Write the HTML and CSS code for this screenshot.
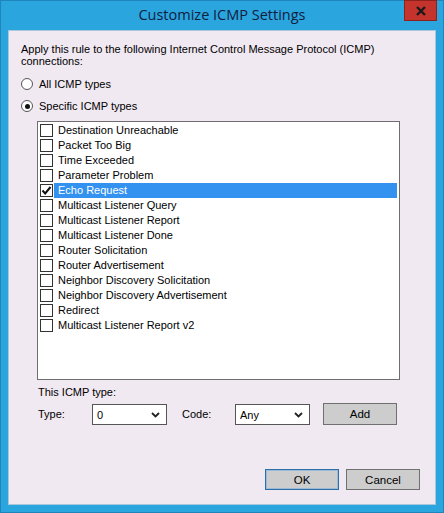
FILE: index.html
```html
<!DOCTYPE html>
<html>
<head>
<meta charset="utf-8">
<link rel="stylesheet" href="styles.css">
</head>
<body>
<div class="window">
  <div class="titlebar">
    <div class="title">Customize ICMP Settings</div>
    <div class="close"><svg width="12" height="10" viewBox="0 0 12 10"><path d="M2 1 L10 9 M10 1 L2 9" stroke="#1a1a1a" stroke-width="2.4"/></svg></div>
  </div>
  <div class="content">
    <p class="intro">Apply this rule to the following Internet Control Message Protocol (ICMP)<br>connections:</p>
    <div class="radio-row"><span class="radio"></span><span>All ICMP types</span></div>
    <div class="radio-row second"><span class="radio on"></span><span>Specific ICMP types</span></div>
    <div class="listbox">
      <div class="item"><span class="cb"></span><span class="lbl">Destination Unreachable</span></div>
      <div class="item"><span class="cb"></span><span class="lbl">Packet Too Big</span></div>
      <div class="item"><span class="cb"></span><span class="lbl">Time Exceeded</span></div>
      <div class="item"><span class="cb"></span><span class="lbl">Parameter Problem</span></div>
      <div class="item sel"><span class="cb"><svg width="11" height="11" viewBox="0 0 11 11"><path d="M1.5 5.5 L4.2 8.5 L9.5 2" fill="none" stroke="#111" stroke-width="2"/></svg></span><span class="lbl">Echo Request</span></div>
      <div class="item"><span class="cb"></span><span class="lbl">Multicast Listener Query</span></div>
      <div class="item"><span class="cb"></span><span class="lbl">Multicast Listener Report</span></div>
      <div class="item"><span class="cb"></span><span class="lbl">Multicast Listener Done</span></div>
      <div class="item"><span class="cb"></span><span class="lbl">Router Solicitation</span></div>
      <div class="item"><span class="cb"></span><span class="lbl">Router Advertisement</span></div>
      <div class="item"><span class="cb"></span><span class="lbl">Neighbor Discovery Solicitation</span></div>
      <div class="item"><span class="cb"></span><span class="lbl">Neighbor Discovery Advertisement</span></div>
      <div class="item"><span class="cb"></span><span class="lbl">Redirect</span></div>
      <div class="item"><span class="cb"></span><span class="lbl">Multicast Listener Report v2</span></div>
    </div>
    <div class="type-label">This ICMP type:</div>
    <div class="controls">
      <span class="ctl-label type">Type:</span>
      <div class="select s1"><span>0</span><svg width="9" height="6" viewBox="0 0 9 6"><path d="M1 1 L4.5 4.5 L8 1" fill="none" stroke="#222" stroke-width="1.8"/></svg></div>
      <span class="ctl-label code">Code:</span>
      <div class="select s2"><span>Any</span><svg width="9" height="6" viewBox="0 0 9 6"><path d="M1 1 L4.5 4.5 L8 1" fill="none" stroke="#222" stroke-width="1.8"/></svg></div>
      <div class="btn add">Add</div>
    </div>
    <div class="footer">
      <div class="btn ok">OK</div>
      <div class="btn cancel">Cancel</div>
    </div>
  </div>
</div>
</body>
</html>
```

FILE: styles.css
```css
html, body {
  margin: 0;
  padding: 0;
  background: #2ba5de;
}
.window {
  width: 444px;
  height: 513px;
  box-sizing: border-box;
  background: #2ba5de;
  border: 1px solid #1f86bd;
  display: flex;
  flex-direction: column;
  font-family: "Liberation Sans", Arial, sans-serif;
  font-size: 11px;
  color: #000;
}
.titlebar {
  height: 29px;
  display: flex;
  justify-content: center;
  position: relative;
}
.title {
  font-family: "Open Sans", "Liberation Sans", sans-serif;
  font-size: 14.5px;
  color: #10203e;
  line-height: 28px;
}
.close {
  position: absolute;
  right: 6px;
  top: -1px;
  width: 33px;
  height: 21px;
  box-sizing: border-box;
  background: #c4342c;
  border: 1px solid #8d221c;
  display: flex;
  align-items: center;
  justify-content: center;
}
.content {
  margin: 0 7px;
  height: 475px;
  background: #f1e9f1;
  padding: 12px 0 0 12px;
  box-sizing: border-box;
  border: 1px solid #a9c6da;
}
.intro {
  margin: 0;
  line-height: 12px;
}
.radio-row {
  display: flex;
  align-items: center;
  height: 14px;
  margin-top: 10px;
  gap: 6px;
}
.radio-row.second {
  margin-top: 8px;
}
.radio {
  width: 10px;
  height: 10px;
  border: 1px solid #555;
  border-radius: 50%;
  background: #fff;
  display: flex;
  align-items: center;
  justify-content: center;
}
.radio.on::after {
  content: "";
  width: 5px;
  height: 5px;
  border-radius: 50%;
  background: #111;
}
.listbox {
  margin: 8px 0 0 16px;
  width: 363px;
  height: 259px;
  box-sizing: border-box;
  border: 1px solid #6e6e6e;
  background: #fff;
  padding: 1px 2px 0 2px;
}
.item {
  display: flex;
  align-items: center;
  height: 15px;
}
.cb {
  width: 13px;
  height: 13px;
  box-sizing: border-box;
  border: 1px solid #333;
  background: #fff;
  display: flex;
  align-items: center;
  justify-content: center;
}
.lbl {
  flex: 1;
  margin-left: 1px;
  padding-left: 4px;
  line-height: 15px;
  height: 15px;
}
.item.sel .lbl {
  background: #3391ef;
  color: #fff;
}
.type-label {
  margin: 6px 0 0 17px;
  line-height: 13px;
}
.controls {
  display: flex;
  align-items: center;
  height: 22px;
  margin: 4px 0 0 17px;
}
.ctl-label {
  display: block;
}
.ctl-label.type {
  width: 54px;
}
.ctl-label.code {
  width: 53px;
}
.select {
  height: 21px;
  box-sizing: border-box;
  border: 1px solid #555;
  background: #fff;
  display: flex;
  align-items: center;
  justify-content: space-between;
  padding: 1px 6px 0 4px;
}
.select.s1 {
  width: 75px;
  margin-right: 15px;
}
.select.s2 {
  width: 75px;
  margin-right: 13px;
}
.btn {
  height: 22px;
  box-sizing: border-box;
  border: 1px solid #707070;
  background: #cdcdcd;
  display: flex;
  align-items: center;
  justify-content: center;
  font-size: 11.5px;
}
.btn.add {
  width: 74px;
}
.footer {
  display: flex;
  justify-content: flex-end;
  gap: 7px;
  margin: 44px 15px 0 0;
}
.btn.ok {
  width: 74px;
  height: 21px;
  border: 1px solid #2e6da6;
  box-shadow: inset 0 0 0 1px #9bbcd8;
}
.btn.cancel {
  width: 74px;
  height: 21px;
}
```
